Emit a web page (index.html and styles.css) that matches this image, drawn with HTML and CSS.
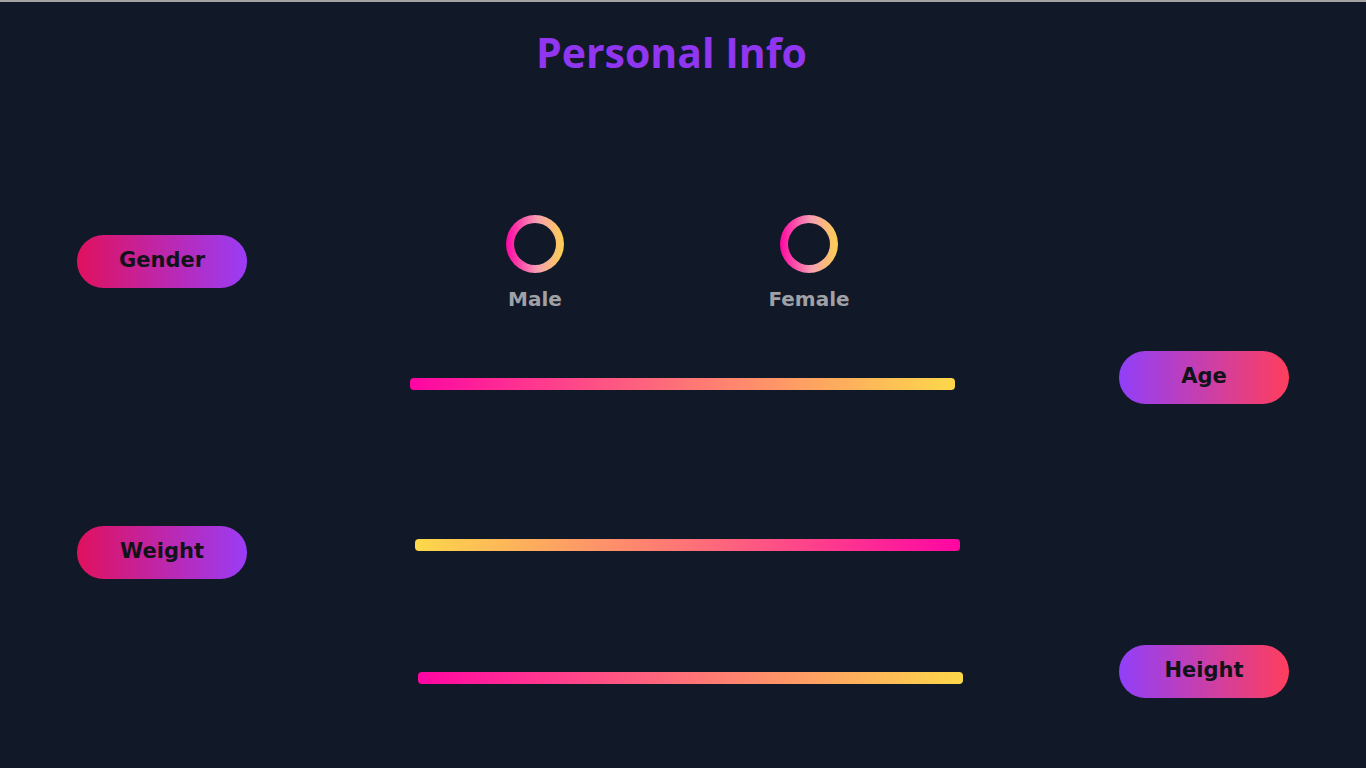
FILE: index.html
```html
<!DOCTYPE html>
<html lang="en">
<head>
<meta charset="utf-8">
<title>Personal Info</title>
<link rel="stylesheet" href="styles.css">
</head>
<body>
  <h1 class="title">Personal Info</h1>
  <main class="form">
    <section class="row row-gender">
      <div class="pill pill-left">Gender</div>
      <div class="middle options">
        <label class="option option-male">
          <span class="ring"></span>
          <span class="option-label">Male</span>
        </label>
        <label class="option option-female">
          <span class="ring"></span>
          <span class="option-label">Female</span>
        </label>
      </div>
      <div></div>
    </section>
    <section class="row row-age">
      <div></div>
      <div class="middle">
        <div class="bar bar-warm bar-age"></div>
      </div>
      <div class="pill pill-right">Age</div>
    </section>
    <section class="row row-weight">
      <div class="pill pill-left">Weight</div>
      <div class="middle">
        <div class="bar bar-reverse bar-weight"></div>
      </div>
      <div></div>
    </section>
    <section class="row row-height">
      <div></div>
      <div class="middle">
        <div class="bar bar-warm bar-height"></div>
      </div>
      <div class="pill pill-right">Height</div>
    </section>
  </main>
</body>
</html>
```

FILE: styles.css
```css
html, body {
  margin: 0;
  padding: 0;
}

body {
  background: #111827;
  border-top: 2px solid #a3a3a3;
  min-height: 766px;
  font-family: "DejaVu Sans", "Liberation Sans", sans-serif;
}

.title {
  margin: 0;
  padding-top: 26px;
  padding-right: 23px;
  text-align: center;
  font-family: "Open Sans", "Liberation Sans", sans-serif;
  font-weight: 700;
  font-size: 41px;
  line-height: 48px;
  color: #9036f0;
}

.form {
  display: flex;
  flex-direction: column;
  padding: 0 77px;
  margin-top: 159px;
}

.row {
  display: grid;
  grid-template-columns: 170px 1fr 170px;
  grid-template-rows: 53px;
  align-items: center;
  height: 53px;
}

.row-age { margin-top: 63px; }
.row-weight { margin-top: 122px; }
.row-height { margin-top: 66px; }

.middle {
  padding: 0 156px 0 163px;
}

.pill {
  height: 53px;
  border-radius: 27px;
  display: flex;
  align-items: center;
  justify-content: center;
  font-weight: 700;
  font-size: 21px;
  color: #111318;
  padding-bottom: 3px;
  box-sizing: border-box;
}

.pill-left {
  background: linear-gradient(90deg, #e0115e, #9b3cf6);
}

.pill-right {
  background: linear-gradient(90deg, #913ff9, #ff3e5d);
}

.options {
  display: flex;
  align-items: center;
}

.option {
  width: 100px;
  display: flex;
  flex-direction: column;
  align-items: center;
  gap: 14px;
  margin-top: 3px;
}

.option-male { margin-left: 75px; }
.option-female { margin-left: 174px; }

.ring {
  position: relative;
  width: 58px;
  height: 58px;
  border-radius: 50%;
  background: linear-gradient(90deg, #ff05a3, #f7a2b2 55%, #fdcf4d);
}

.ring::after {
  content: "";
  position: absolute;
  inset: 8px;
  border-radius: 50%;
  background: #111827;
}

.option-label {
  font-weight: 700;
  font-size: 20px;
  line-height: 24px;
  color: #a0a1a6;
}

.bar {
  width: 545px;
  height: 12px;
  border-radius: 4px;
}

.bar-warm {
  background: linear-gradient(90deg, #ff05a3, #fe7377 50%, #fdd84a);
}

.bar-reverse {
  background: linear-gradient(90deg, #fdd84a, #fe7377 50%, #ff05a3);
}

.bar-age { margin-top: 12px; }
.bar-weight { margin-left: 5px; margin-top: -14px; }
.bar-height { margin-left: 8px; margin-top: 13px; }
```
